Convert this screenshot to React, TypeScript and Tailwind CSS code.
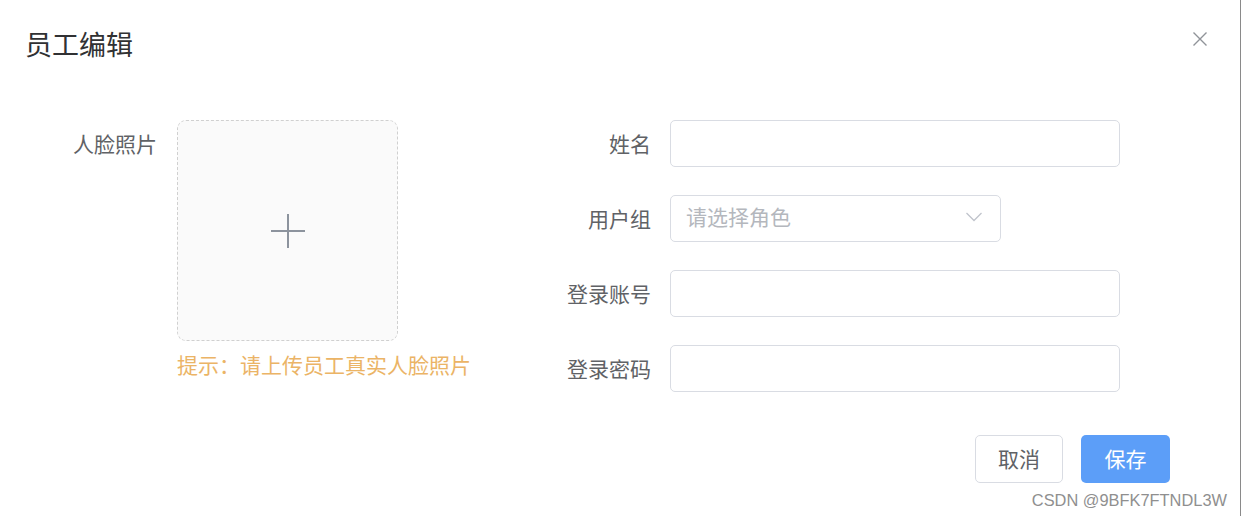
import { useState } from 'react'

const cjk = { fontFamily: '"Noto Sans CJK SC", "Noto Sans", sans-serif' }

function Field({ label, children }: { label: string; children: React.ReactNode }) {
  return (
    <div className="flex">
      <label className="w-[120px] pr-[19px] text-right text-[21px] leading-[47px] text-[#606266]">
        {label}
      </label>
      {children}
    </div>
  )
}

export default function App() {
  const [name, setName] = useState('')
  const [account, setAccount] = useState('')
  const [password, setPassword] = useState('')

  return (
    <div className="relative h-[516px] w-[1242px] bg-white" style={cjk}>
      <div className="h-[516px] w-[1241px] border-r border-[#8a8a8a]">
        {/* header */}
        <div className="flex h-[120px] justify-between pl-[25px] pr-[33px] pt-[26px]">
          <h2 className="text-[27px] leading-[36px] text-[#303133]">员工编辑</h2>
          <button className="mt-[6px] h-[14px] w-[14px]">
            <svg width="14" height="14" viewBox="0 0 14 14" fill="none" stroke="#909399" strokeWidth="1.4">
              <path d="M0.5 0.5 L13.5 13.5 M13.5 0.5 L0.5 13.5" />
            </svg>
          </button>
        </div>

        {/* body */}
        <div className="flex pl-[57px]">
          <div className="flex">
            <label className="w-[120px] pr-[20px] text-right text-[21px] leading-[47px] text-[#606266]">
              人脸照片
            </label>
            <div className="w-[220px]">
              <div className="flex h-[221px] w-[221px] items-center justify-center rounded-[9px] border border-dashed border-[#d0d0d0] bg-[#fafafa]">
                <svg width="34" height="34" viewBox="0 0 34 34" stroke="#8c939d" strokeWidth="2">
                  <path d="M17 0 V34 M0 17 H34" />
                </svg>
              </div>
              <p className="mt-[11px] whitespace-nowrap text-[21px] leading-[24px] text-[#ebb466]">
                提示：请上传员工真实人脸照片
              </p>
            </div>
          </div>

          <div className="ml-[153px] flex flex-col gap-[28px]">
            <Field label="姓名">
              <input
                value={name}
                onChange={(e) => setName(e.target.value)}
                className="h-[47px] w-[450px] rounded-[5px] border border-[#d9dce3] px-[15px] text-[21px] outline-none"
              />
            </Field>
            <Field label="用户组">
              <div className="flex h-[47px] w-[331px] items-center justify-between rounded-[5px] border border-[#d9dce3] pl-[15px] pr-[18px]">
                <span className="-mt-[3px] text-[21px] text-[#b4b7bd]">请选择角色</span>
                <svg width="16" height="10" viewBox="0 0 16 10" fill="none" stroke="#c0c4cc" strokeWidth="1.3" className="-mt-[3px]">
                  <path d="M0.5 1 L8 8.5 L15.5 1" />
                </svg>
              </div>
            </Field>
            <Field label="登录账号">
              <input
                value={account}
                onChange={(e) => setAccount(e.target.value)}
                className="h-[47px] w-[450px] rounded-[5px] border border-[#d9dce3] px-[15px] text-[21px] outline-none"
              />
            </Field>
            <Field label="登录密码">
              <input
                type="password"
                value={password}
                onChange={(e) => setPassword(e.target.value)}
                className="h-[47px] w-[450px] rounded-[5px] border border-[#d9dce3] px-[15px] text-[21px] outline-none"
              />
            </Field>
          </div>
        </div>

        {/* footer */}
        <div className="mt-[43px] flex justify-end gap-[18px] pr-[70px]">
          <button className="h-[48px] w-[88px] rounded-[5px] border border-[#d9dce3] bg-white text-[21px] text-[#606266]">
            取消
          </button>
          <button className="h-[48px] w-[89px] rounded-[5px] bg-[#5c9ef8] text-[21px] text-white">
            保存
          </button>
        </div>
      </div>

      <span
        className="absolute bottom-[6px] right-[15px] text-[16.4px] leading-[20px] text-[#8f8f8f]"
        style={{ fontFamily: '"Liberation Sans", Arial, sans-serif' }}
      >
        CSDN @9BFK7FTNDL3W
      </span>
    </div>
  )
}
